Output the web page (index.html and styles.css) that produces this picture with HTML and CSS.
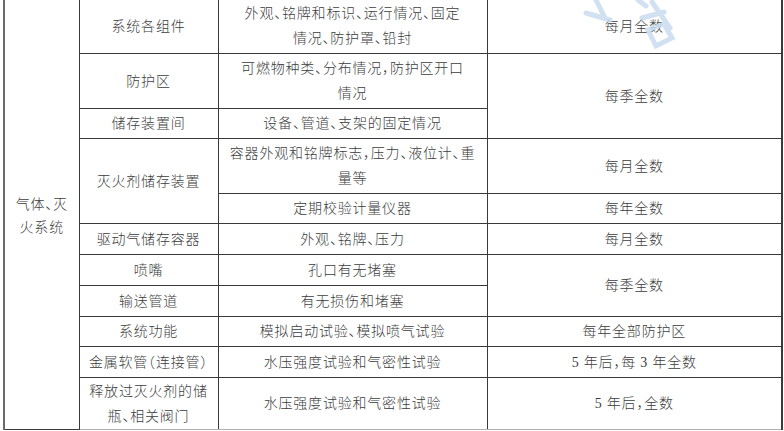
FILE: index.html
```html
<!DOCTYPE html>
<html lang="zh-CN">
<head>
<meta charset="utf-8">
<title>气体灭火系统检查表</title>
<link rel="stylesheet" href="styles.css">
</head>
<body>
<div class="page">
<table class="grid">
  <colgroup>
    <col class="c1"><col class="c2"><col class="c3"><col class="c4">
  </colgroup>
  <tbody>
    <tr class="h2l">
      <td rowspan="11" class="sys">气体、灭<br>火系统</td>
      <td>系统各组件</td>
      <td>外观、铭牌和标识、运行情况、固定<br>情况、防护罩、铅封</td>
      <td class="edge">每月全数</td>
    </tr>
    <tr class="h2l">
      <td>防护区</td>
      <td>可燃物种类、分布情况，防护区开口<br>情况</td>
      <td rowspan="2" class="edge">每季全数</td>
    </tr>
    <tr class="h1a">
      <td>储存装置间</td>
      <td>设备、管道、支架的固定情况</td>
    </tr>
    <tr class="h2l">
      <td rowspan="2">灭火剂储存装置</td>
      <td>容器外观和铭牌标志，压力、液位计、重<br>量等</td>
      <td class="edge">每月全数</td>
    </tr>
    <tr class="h1a">
      <td>定期校验计量仪器</td>
      <td class="edge">每年全数</td>
    </tr>
    <tr class="h1b">
      <td>驱动气储存容器</td>
      <td>外观、铭牌、压力</td>
      <td class="edge">每月全数</td>
    </tr>
    <tr class="h1b">
      <td>喷嘴</td>
      <td>孔口有无堵塞</td>
      <td rowspan="2" class="edge">每季全数</td>
    </tr>
    <tr class="h1b">
      <td>输送管道</td>
      <td>有无损伤和堵塞</td>
    </tr>
    <tr class="h1a">
      <td>系统功能</td>
      <td>模拟启动试验、模拟喷气试验</td>
      <td class="edge">每年全部防护区</td>
    </tr>
    <tr class="h1b">
      <td>金属软管（连接管）</td>
      <td>水压强度试验和气密性试验</td>
      <td class="edge">5 年后，每 3 年全数</td>
    </tr>
    <tr class="hlast">
      <td>释放过灭火剂的储<br>瓶、相关阀门</td>
      <td>水压强度试验和气密性试验</td>
      <td class="edge">5 年后，全数</td>
    </tr>
  </tbody>
</table>
<svg class="watermark" width="110" height="60" viewBox="0 0 110 60" aria-hidden="true">
  <g stroke="#c9dcf0" stroke-width="5" stroke-linecap="round" fill="none" opacity="0.85">
    <path d="M28 0 L36 16"/>
    <path d="M18 13 L42 20"/>
    <path d="M70 0 L78 6"/>
    <path d="M84 2 L102 28"/>
    <path d="M74 18 L96 12"/>
    <path d="M80 30 L88 46 L104 38 L96 24 Z"/>
  </g>
</svg>
</div>
</body>
</html>
```

FILE: styles.css
```css
html, body {
  margin: 0;
  padding: 0;
  background: #ffffff;
}

.page {
  position: relative;
  width: 784px;
  height: 431px;
  overflow: hidden;
}

.grid {
  margin: -2px 0 0 3px;
  border-collapse: collapse;
  table-layout: fixed;
  width: 778px;
  font-family: "Liberation Serif", "Noto Sans CJK SC", serif;
  font-weight: 300;
  font-size: 14px;
  line-height: 25px;
  letter-spacing: 0.8px;
  font-feature-settings: "halt" 1;
  color: #3c3c3c;
}

.c1 { width: 75px; }
.c2 { width: 139px; }
.c3 { width: 269px; }
.c4 { width: 295px; }

.grid td {
  border: 1px solid #3a3a3a;
  padding: 0 3px;
  text-align: center;
  vertical-align: middle;
}

.grid td.sys {
  border-left: 2px solid #6a6a6a;
  line-height: 23px;
  padding-top: 4px;
}

.grid tr.hlast td {
  border-bottom: 1px solid #b0b0b0;
}

.grid td.edge {
  border-right: 2px solid #3a3a3a;
}

.h2l { height: 55px; }
.h1a { height: 30px; }
.h1b { height: 31px; }
.hlast { height: 52px; }

.watermark {
  position: absolute;
  left: 568px;
  top: 0;
}
```
